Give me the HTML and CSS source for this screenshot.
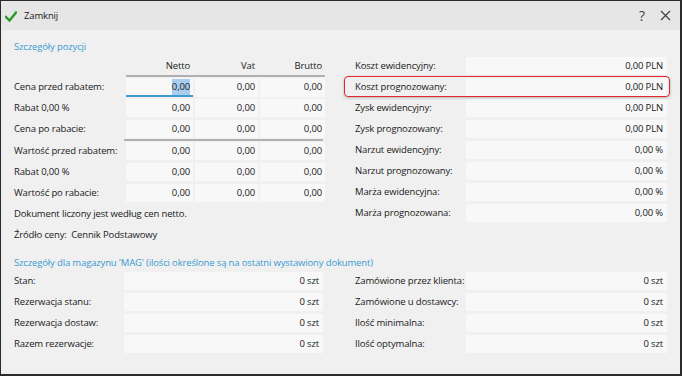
FILE: index.html
```html
<!DOCTYPE html>
<html lang="pl">
<head>
<meta charset="utf-8">
<link rel="stylesheet" href="styles.css">
</head>
<body>
<div class="window">
  <div class="titlebar">
    <div class="close-btn">
      <svg class="check" width="12" height="11" viewBox="0 0 12 11"><path d="M1 6 L4.5 9.5 L11 1.5" fill="none" stroke="#2b9a2b" stroke-width="2.4" stroke-linecap="square"/></svg>
      <span>Zamknij</span>
    </div>
    <div class="tb-icons">
      <span class="help">?</span>
      <svg class="xicon" width="11" height="11" viewBox="0 0 11 11"><path d="M1 1 L10 10 M10 1 L1 10" stroke="#444" stroke-width="1.3" fill="none"/></svg>
    </div>
  </div>
  <div class="content">
    <div class="heading">Szczegóły pozycji</div>
    <div class="top">
      <div class="prices">
        <div class="prow head">
          <span></span><span class="h">Netto</span><span class="h">Vat</span><span class="h">Brutto</span>
        </div>
        <div class="prow">
          <span class="lbl">Cena przed rabatem:</span><span class="cell focus"><span class="sel">0,00</span></span><span class="cell">0,00</span><span class="cell">0,00</span>
        </div>
        <div class="prow">
          <span class="lbl">Rabat 0,00 %</span><span class="cell">0,00</span><span class="cell">0,00</span><span class="cell">0,00</span>
        </div>
        <div class="prow">
          <span class="lbl">Cena po rabacie:</span><span class="cell">0,00</span><span class="cell">0,00</span><span class="cell">0,00</span>
        </div>
        <div class="sep"></div>
        <div class="prow">
          <span class="lbl">Wartość przed rabatem:</span><span class="cell">0,00</span><span class="cell">0,00</span><span class="cell">0,00</span>
        </div>
        <div class="prow">
          <span class="lbl">Rabat 0,00 %</span><span class="cell">0,00</span><span class="cell">0,00</span><span class="cell">0,00</span>
        </div>
        <div class="prow">
          <span class="lbl">Wartość po rabacie:</span><span class="cell">0,00</span><span class="cell">0,00</span><span class="cell">0,00</span>
        </div>
        <div class="note">Dokument liczony jest według cen netto.</div>
        <div class="note">Źródło ceny:&nbsp; Cennik Podstawowy</div>
      </div>
      <div class="costs">
        <div class="crow"><span class="lbl">Koszt ewidencyjny:</span><span class="field">0,00 PLN</span></div>
        <div class="crow marked"><span class="lbl">Koszt prognozowany:</span><span class="field">0,00 PLN</span></div>
        <div class="crow"><span class="lbl">Zysk ewidencyjny:</span><span class="field">0,00 PLN</span></div>
        <div class="crow"><span class="lbl">Zysk prognozowany:</span><span class="field">0,00 PLN</span></div>
        <div class="crow"><span class="lbl">Narzut ewidencyjny:</span><span class="field">0,00 %</span></div>
        <div class="crow"><span class="lbl">Narzut prognozowany:</span><span class="field">0,00 %</span></div>
        <div class="crow"><span class="lbl">Marża ewidencyjna:</span><span class="field">0,00 %</span></div>
        <div class="crow"><span class="lbl">Marża prognozowana:</span><span class="field">0,00 %</span></div>
      </div>
    </div>
    <div class="heading second">Szczegóły dla magazynu 'MAG' (ilości określone są na ostatni wystawiony dokument)</div>
    <div class="stock">
      <div class="scol left">
        <div class="srow"><span class="lbl">Stan:</span><span class="field">0 szt</span></div>
        <div class="srow"><span class="lbl">Rezerwacja stanu:</span><span class="field">0 szt</span></div>
        <div class="srow"><span class="lbl">Rezerwacja dostaw:</span><span class="field">0 szt</span></div>
        <div class="srow"><span class="lbl">Razem rezerwacje:</span><span class="field">0 szt</span></div>
      </div>
      <div class="scol right">
        <div class="srow"><span class="lbl">Zamówione przez klienta:</span><span class="field">0 szt</span></div>
        <div class="srow"><span class="lbl">Zamówione u dostawcy:</span><span class="field">0 szt</span></div>
        <div class="srow"><span class="lbl">Ilość minimalna:</span><span class="field">0 szt</span></div>
        <div class="srow"><span class="lbl">Ilość optymalna:</span><span class="field">0 szt</span></div>
      </div>
    </div>
  </div>
</div>
</body>
</html>
```
FILE: styles.css
```css
* { box-sizing: border-box; }
html, body { margin: 0; padding: 0; }
body {
  width: 682px;
  height: 376px;
  overflow: hidden;
  background: #f0f0f0;
  font-family: "Open Sans", "Noto Sans", sans-serif;
  font-size: 9.5px;
  letter-spacing: -0.15px;
  color: #1a1a1a;
  white-space: nowrap;
}
.window {
  width: 682px;
  height: 376px;
  border: 1px solid #2a2a2a;
  border-right-width: 2px;
  border-bottom-width: 2px;
  background: #f0f0f0;
  display: flex;
  flex-direction: column;
}
.titlebar {
  height: 29px;
  background: #e6e6e6;
  display: flex;
  align-items: center;
  justify-content: space-between;
  padding: 0 9px 0 4px;
  flex: none;
}
.close-btn {
  display: flex;
  align-items: center;
  gap: 7px;
}
.check { margin-top: 1px; }
.tb-icons {
  display: flex;
  align-items: center;
  gap: 15px;
}
.help {
  font-size: 14px;
  color: #444;
  line-height: 1;
}
.content {
  padding: 8px 0 0 13px;
}
.heading {
  color: #3a9bd0;
  height: 18px;
  line-height: 18px;
  margin-bottom: 1px;
}
.heading.second {
  margin-top: 7px;
  margin-bottom: 0;
}
.top {
  display: flex;
  gap: 32px;
}
.prices {
  width: 309px;
  display: flex;
  flex-direction: column;
}
.prow {
  display: grid;
  grid-template-columns: 110px 67px 63px 65px;
  column-gap: 2px;
  height: 18px;
  line-height: 18px;
  margin-bottom: 3px;
}
.prow.head {
  height: 20px;
  margin-bottom: 1px;
}
.prow.head .h {
  text-align: right;
  padding-right: 3px;
  line-height: 18px;
  border-bottom: 2px solid #b0b0b0;
}
.prow.head .h:nth-child(2),
.prow.head .h:nth-child(3) {
  margin-right: -2px;
  padding-right: 5px;
}
.cell {
  background: #f8f8f8;
  text-align: right;
  padding-right: 3px;
}
.cell.focus {
  border-bottom: 2px solid #3f9ad6;
  line-height: 17px;
}
.sel {
  background: #a9cdee;
  padding: 1px 0 2px;
}
.sep {
  height: 2px;
  background: #b0b0b0;
  margin: -2px 0 1px 110px;
}
.note {
  height: 18px;
  line-height: 18px;
  margin-bottom: 3px;
}
.costs {
  display: flex;
  flex-direction: column;
  width: 312px;
}
.crow, .srow {
  display: grid;
  grid-template-columns: 111px 1fr;
  height: 18px;
  line-height: 18px;
  margin-bottom: 3px;
}
.crow.marked {
  position: relative;
}
.crow.marked::after {
  content: "";
  position: absolute;
  left: -11px;
  right: -3px;
  top: -2px;
  bottom: -1px;
  border: 1.5px solid #e5262a;
  border-radius: 4px;
  box-shadow: 0 1px 3px rgba(0,0,0,0.25);
}
.field {
  background: #f8f8f8;
  text-align: right;
  padding-right: 4px;
}
.stock {
  display: flex;
  gap: 32px;
}
.scol.left { width: 309px; }
.scol.left .srow { grid-template-columns: 110px 1fr; }
.scol.right { width: 312px; }
```
